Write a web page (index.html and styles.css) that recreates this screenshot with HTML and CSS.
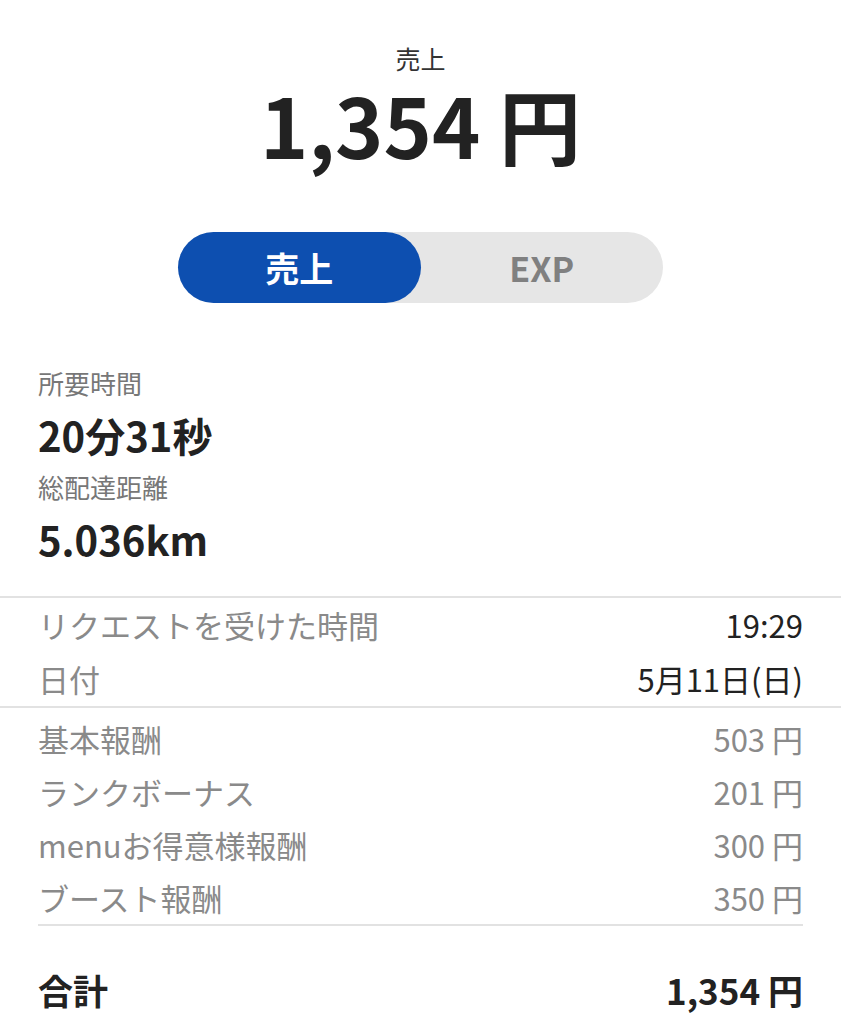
FILE: index.html
```html
<!DOCTYPE html>
<html lang="ja">
<head>
  <meta charset="UTF-8">
  <meta name="viewport" content="width=device-width, initial-scale=1.0">
  <title>売上詳細</title>
  <link rel="stylesheet" href="styles.css">
</head>
<body>
  <div id="summary">
    <div class="summary-label">売上</div>
    <div class="summary-amount">1,354 円</div>
  </div>

  <div id="toggle">
    <div class="toggle-item active">売上</div>
    <div class="toggle-item">EXP</div>
  </div>

  <div id="stats">
    <div class="stat-label">所要時間</div>
    <div class="stat-value">20分31秒</div>
    <div class="stat-label">総配達距離</div>
    <div class="stat-value">5.036km</div>
  </div>

  <div class="group group-info">
    <div class="row"><span class="label">リクエストを受けた時間</span><span class="value dark">19:29</span></div>
    <div class="row"><span class="label">日付</span><span class="value dark">5月11日(日)</span></div>
  </div>

  <div class="group group-fees">
    <div class="row"><span class="label">基本報酬</span><span class="value">503 円</span></div>
    <div class="row"><span class="label">ランクボーナス</span><span class="value">201 円</span></div>
    <div class="row"><span class="label">menuお得意様報酬</span><span class="value">300 円</span></div>
    <div class="row"><span class="label">ブースト報酬</span><span class="value">350 円</span></div>
  </div>

  <div class="row total">
    <span>合計</span>
    <span>1,354 円</span>
  </div>
</body>
</html>
```

FILE: styles.css
```css
body {
  font-family: "Noto Sans CJK JP", "Noto Sans", sans-serif;
  margin: 0;
  padding: 0;
  background-color: #fff;
  color: #222;
}

#summary {
  padding-top: 44px;
  text-align: center;
}

.summary-label {
  font-size: 25px;
  line-height: 28px;
  color: #333;
}

.summary-amount {
  font-size: 82px;
  font-weight: 700;
  line-height: 104px;
  color: #222;
}

#toggle {
  display: flex;
  width: 485px;
  height: 71px;
  margin: 56px auto 0;
  background-color: #e6e6e6;
  border-radius: 36px;
}

.toggle-item {
  flex: 1;
  display: flex;
  align-items: center;
  justify-content: center;
  font-size: 34px;
  font-weight: 700;
  color: #808080;
  border-radius: 36px;
}

.toggle-item.active {
  background-color: #0d4fb0;
  color: #fff;
}

#stats {
  padding: 54px 38px 31px;
}

.stat-label {
  font-size: 26px;
  line-height: 52px;
  color: #777;
}

.stat-value {
  font-size: 40px;
  font-weight: 700;
  line-height: 52px;
  color: #222;
}

.group {
  border-top: 2px solid #e2e2e2;
}

.group-info {
  padding: 0 38px;
}

.group-info .row {
  line-height: 54px;
}

.group-fees {
  padding: 4px 38px 0;
}

.group-fees .row {
  line-height: 53px;
}

.group-fees .row:last-child {
  border-bottom: 2px solid #e2e2e2;
}

.row {
  display: flex;
  justify-content: space-between;
  font-size: 31px;
}

.label {
  color: #8a8a8a;
}

.value {
  color: #8a8a8a;
}

.value.dark {
  color: #222;
}

.total {
  margin: 34px 38px 0;
  font-size: 35px;
  font-weight: 700;
  line-height: 60px;
  color: #222;
}
```
